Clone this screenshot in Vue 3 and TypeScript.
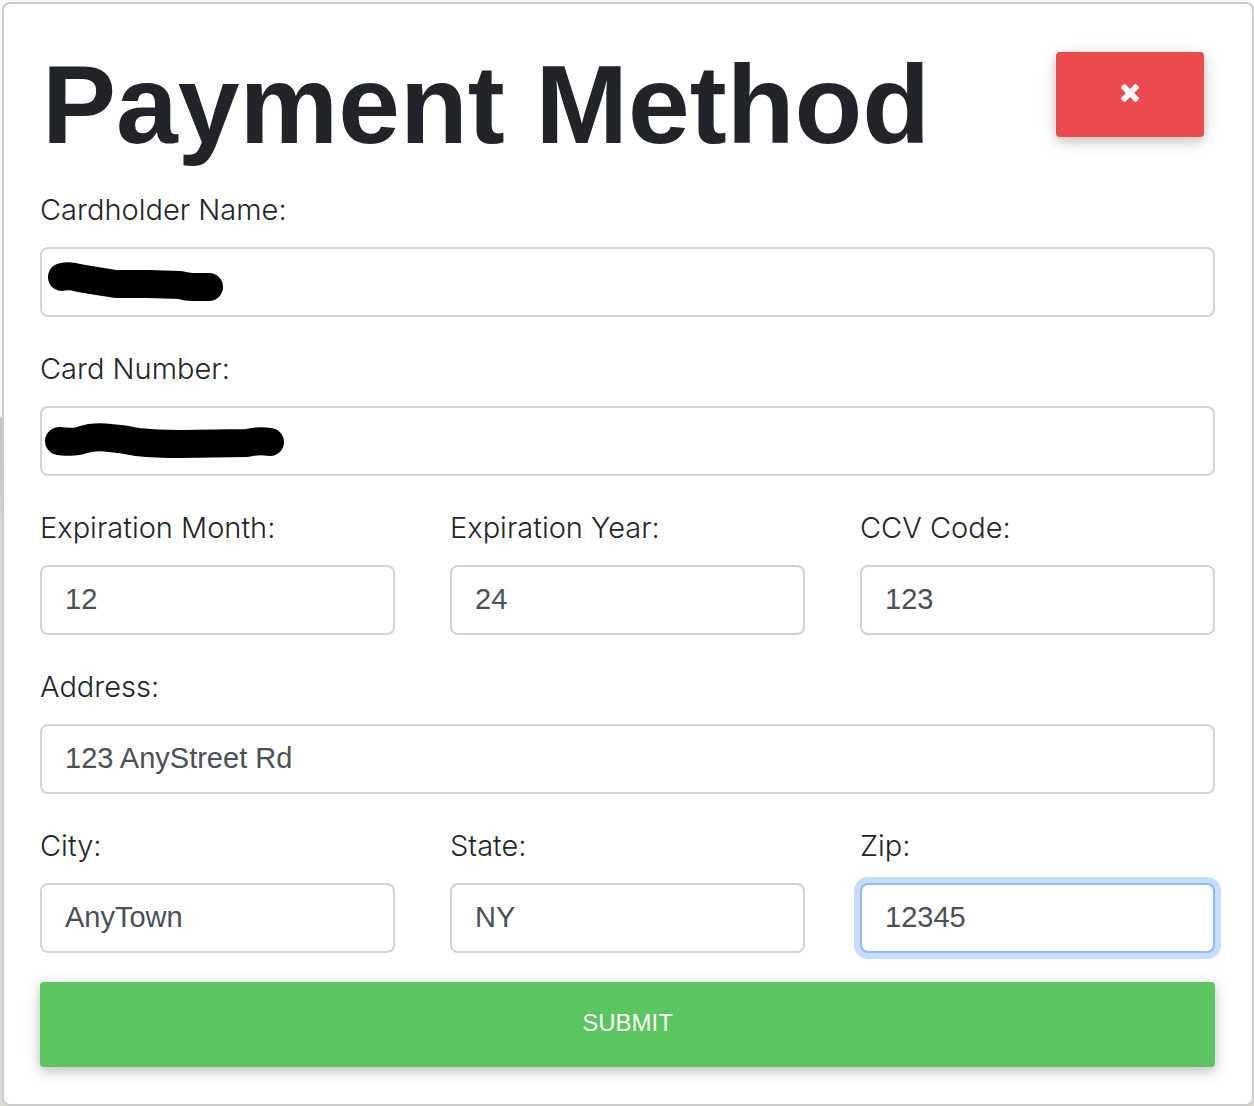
<script setup lang="ts">
import { reactive } from 'vue'

interface Field {
  id: string
  label: string
  value: string
  wide?: boolean
  active?: boolean
  mark?: string
}

const fields = reactive<Field[]>([
  { id: 'name', label: 'Cardholder Name:', value: '', wide: true, mark: 'M22 30 Q30 28 39 31 Q56 34 76 37 L108 37 L140 38 Q147 40 153 40 L169 40' },
  { id: 'number', label: 'Card Number:', value: '', wide: true, mark: 'M19 35 Q34 37 42 34 Q54 30 70 32 Q84 33 97 36 Q116 38 140 38 L207 37 Q219 34 230 36' },
  { id: 'month', label: 'Expiration Month:', value: '12' },
  { id: 'year', label: 'Expiration Year:', value: '24' },
  { id: 'ccv', label: 'CCV Code:', value: '123' },
  { id: 'address', label: 'Address:', value: '123 AnyStreet Rd', wide: true },
  { id: 'city', label: 'City:', value: 'AnyTown' },
  { id: 'state', label: 'State:', value: 'NY' },
  { id: 'zip', label: 'Zip:', value: '12345', active: true },
])
</script>

<template>
  <main class="page">
    <form class="card" @submit.prevent>
      <header class="header">
        <h1 class="title">Payment Method</h1>
        <button type="button" class="btn close" aria-label="Close">
          <svg class="icon" viewBox="302 366 1188 1188" aria-hidden="true">
            <path
              fill="currentColor"
              d="M1490 1322q0 40-28 68l-136 136q-28 28-68 28t-68-28l-294-294-294 294q-28 28-68 28t-68-28l-136-136q-28-28-28-68t28-68l294-294-294-294q-28-28-28-68t28-68l136-136q28-28 68-28t68 28l294 294 294-294q28-28 68-28t68 28l136 136q28 28 28 68t-28 68l-294 294 294 294q28 28 28 68z"
            />
          </svg>
        </button>
      </header>

      <div class="fields">
        <div v-for="f in fields" :key="f.id" class="field" :class="{ wide: f.wide }">
          <label class="label" :for="f.id">{{ f.label }}</label>
          <div class="control">
            <input :id="f.id" v-model="f.value" type="text" class="input" :class="{ active: f.active }" />
            <svg v-if="f.mark" class="mark" viewBox="0 0 250 70" aria-hidden="true">
              <path :d="f.mark" />
            </svg>
          </div>
        </div>
      </div>

      <button type="submit" class="btn submit">SUBMIT</button>
    </form>
  </main>
</template>

<style>
body {
  background: linear-gradient(#fafafa 416px, #c4c4c4 418px, #c8c8c8 470px, #dcd9d2 530px, #dcd9d2);
}
</style>

<style scoped>
.page {
  padding: 2px 0 0 2px;
  font-family: "Liberation Sans", Arial, sans-serif;
  color: #212529;
}

.card {
  padding: 34px 37px 37px 36px;
  border: 2px solid #cbcbcb;
  border-radius: 8px;
  background: #fff;
}

.header {
  display: flex;
  align-items: flex-start;
  justify-content: space-between;
  margin-bottom: 14px;
}

.title {
  margin: 0;
  padding-left: 2px;
  font-size: 111px;
  line-height: 134px;
  font-weight: 700;
  white-space: nowrap;
}

.btn {
  height: 85px;
  padding: 0 0 3px;
  border: 0;
  border-radius: 4px;
  color: #fff;
  font-family: inherit;
  font-size: 24px;
  box-shadow: 0 4px 10px rgba(0, 0, 0, 0.16), 0 4px 20px rgba(0, 0, 0, 0.12);
  cursor: pointer;
}

.close {
  display: flex;
  align-items: center;
  justify-content: center;
  width: 148px;
  margin: 14px 11px 0 0;
  background: #ed4a50;
}

.icon {
  width: 18px;
  height: 18px;
}

.fields {
  display: grid;
  grid-template-columns: repeat(3, minmax(0, 1fr));
  gap: 28px 55px;
}

.wide {
  grid-column: 1 / -1;
}

.label {
  display: block;
  margin-bottom: 13px;
  font-family: Inter, "Liberation Sans", sans-serif;
  font-weight: 300;
  font-size: 29px;
  line-height: 48px;
}

.control {
  position: relative;
}

.input {
  display: block;
  box-sizing: border-box;
  width: 100%;
  height: 70px;
  padding: 0 23px 2px;
  border: 2px solid #ced4da;
  border-radius: 8px;
  outline: 0;
  background: #fff;
  color: #495057;
  font-family: inherit;
  font-size: 29px;
}

.input:focus,
.input.active {
  border-color: #8bbbfb;
  box-shadow: 0 0 0 6px #c8ddfd;
}

.mark {
  position: absolute;
  top: 0;
  left: 0;
  width: 250px;
  height: 70px;
  pointer-events: none;
}

.mark path {
  fill: none;
  stroke: #000;
  stroke-width: 28px;
  stroke-linecap: round;
  stroke-linejoin: round;
}

.submit {
  display: block;
  width: 100%;
  margin-top: 29px;
  background: #5bc660;
}
</style>
